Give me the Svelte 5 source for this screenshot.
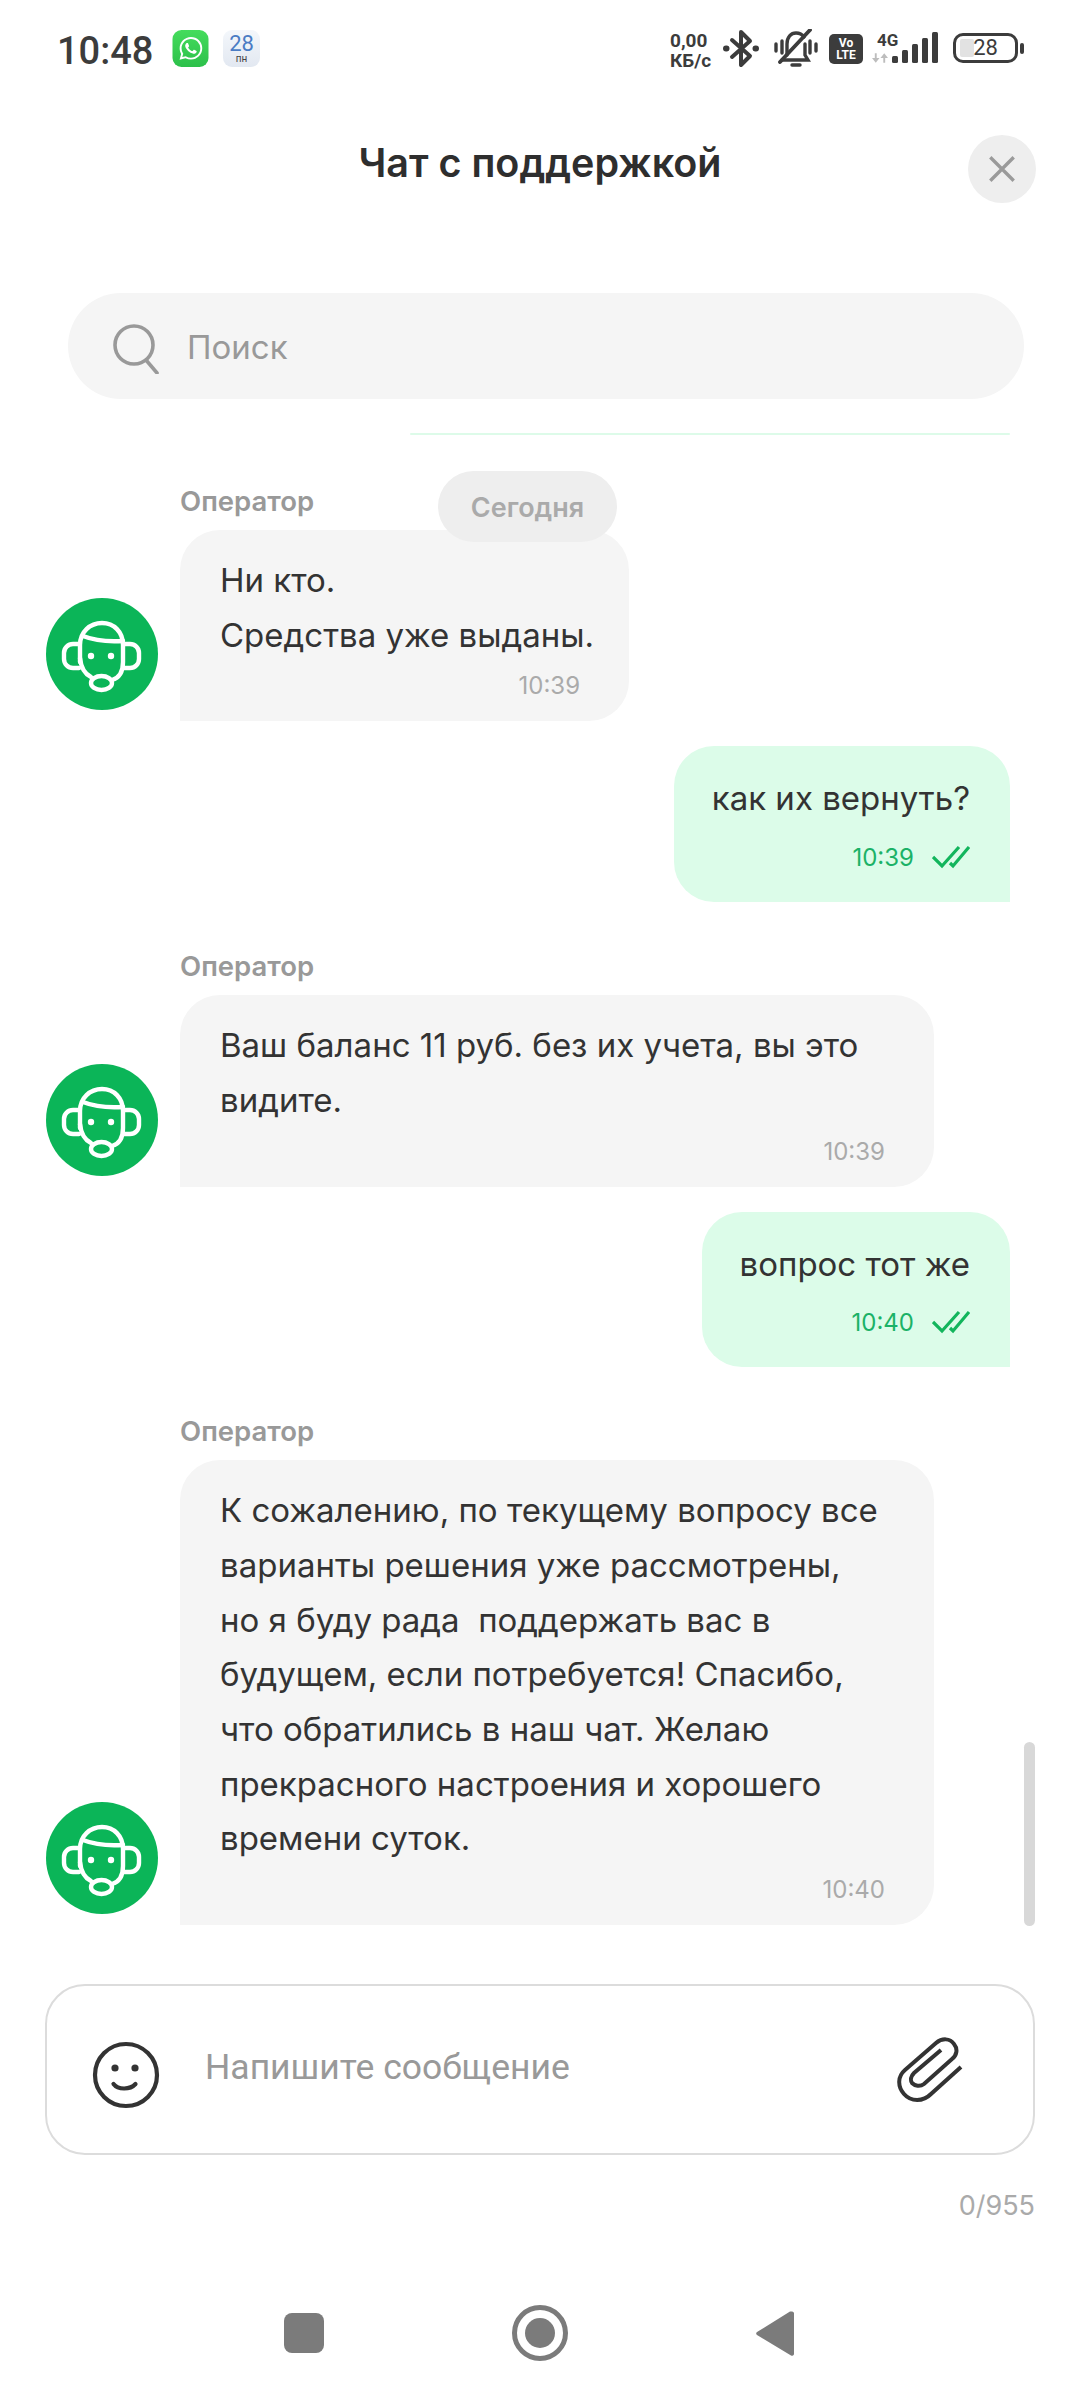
<script lang="ts">
  interface Message {
    from: 'op' | 'me';
    text: string;
    time: string;
    wide?: boolean;
  }

  const messages: Message[] = [
    { from: 'op', text: 'Ни кто.\nСредства уже выданы.', time: '10:39' },
    { from: 'me', text: 'как их вернуть?', time: '10:39' },
    { from: 'op', text: 'Ваш баланс 11 руб. без их учета, вы это\nвидите.', time: '10:39', wide: true },
    { from: 'me', text: 'вопрос тот же', time: '10:40' },
    {
      from: 'op',
      text: 'К сожалению, по текущему вопросу все\nварианты решения уже рассмотрены,\nно я буду рада\u00a0 поддержать вас в\nбудущем, если потребуется! Спасибо,\nчто обратились в наш чат. Желаю\nпрекрасного настроения и хорошего\nвремени суток.',
      time: '10:40',
      wide: true
    }
  ];
</script>

<div class="page">
  <div class="statusbar">
    <span class="clock">10:48</span>
    <svg class="wa" viewBox="0 0 36 37">
      <defs>
        <linearGradient id="wag" x1="0" y1="0" x2="0" y2="1">
          <stop offset="0" stop-color="#45dc5c" />
          <stop offset="1" stop-color="#2cc04a" />
        </linearGradient>
      </defs>
      <rect width="36" height="37" rx="9" fill="url(#wag)" />
      <g transform="translate(7 7) scale(0.95)">
        <path fill="#fff" d="M17.472 14.382c-.297-.149-1.758-.867-2.03-.967-.273-.099-.471-.148-.67.15-.197.297-.767.966-.94 1.164-.173.199-.347.223-.644.075-.297-.15-1.255-.463-2.39-1.475-.883-.788-1.48-1.761-1.653-2.059-.173-.297-.018-.458.13-.606.134-.133.298-.347.446-.52.149-.174.198-.298.298-.497.099-.198.05-.371-.025-.52-.075-.149-.669-1.612-.916-2.207-.242-.579-.487-.5-.669-.51-.173-.008-.371-.01-.57-.01-.198 0-.52.074-.792.372-.272.297-1.04 1.016-1.04 2.479 0 1.462 1.065 2.875 1.213 3.074.149.198 2.096 3.2 5.077 4.487.709.306 1.262.489 1.694.625.712.227 1.36.195 1.871.118.571-.085 1.758-.719 2.006-1.413.248-.694.248-1.289.173-1.413-.074-.124-.272-.198-.57-.347m-5.421 7.403h-.004a9.87 9.87 0 01-5.031-1.378l-.361-.214-3.741.982.998-3.648-.235-.374a9.86 9.86 0 01-1.51-5.26c.001-5.45 4.436-9.884 9.888-9.884 2.64 0 5.122 1.03 6.988 2.898a9.825 9.825 0 012.893 6.994c-.003 5.45-4.437 9.884-9.885 9.884m8.413-18.297A11.815 11.815 0 0012.05 0C5.495 0 .16 5.335.157 11.892c0 2.096.547 4.142 1.588 5.945L.057 24l6.305-1.654a11.882 11.882 0 005.683 1.448h.005c6.554 0 11.89-5.335 11.893-11.893a11.821 11.821 0 00-3.48-8.413z" />
      </g>
    </svg>
    <div class="cal">
      <span class="cal-day">28</span>
      <span class="cal-week">пн</span>
    </div>

    <div class="status-right">
      <div class="speed"><span>0,00</span><span>КБ/с</span></div>
      <svg class="bt" viewBox="0 0 36 39" fill="none" stroke="#3c3c3c" stroke-width="4" stroke-linejoin="round" stroke-linecap="round">
        <path d="M9 11 L27 27 L18 36 V3 L27 12 L9 28" />
        <path d="M3 19.5 L3.5 19.5 M32.5 19.5 L33 19.5" stroke-width="6" />
      </svg>
      <svg class="bell" viewBox="0 0 44 38" fill="none" stroke="#3c3c3c" stroke-width="3.4" stroke-linecap="round">
        <path d="M2 15v7M8 12v12M42 15v7M36 12v12" />
        <path d="M13 26V15C13 8 17 4 22 4c3 0 6 1 8 4M31 15v11l3 5H8" />
        <path d="M6 33 L36 1" stroke-width="3.8" />
        <path d="M18 36h8" stroke-width="3.4" />
      </svg>
      <div class="volte"><span>Vo</span><span>LTE</span></div>
      <div class="net">
        <span class="net-g">4G</span>
        <svg viewBox="0 0 17 12" class="arrows" fill="#bdbdbd"><path d="M0 6h3V1h2v5h3l-4 5zM9 6h3v5h2V6h3l-4-5z" /></svg>
      </div>
      <svg class="bars" viewBox="0 0 46 32" fill="#3c3c3c">
        <rect x="0" y="24" width="6" height="7" rx="1.5" />
        <rect x="10" y="18" width="6" height="13" rx="1.5" />
        <rect x="20" y="12" width="6" height="19" rx="1.5" />
        <rect x="30" y="6" width="6" height="25" rx="1.5" />
        <rect x="40" y="0" width="6" height="31" rx="1.5" />
      </svg>
      <div class="battery">
        <div class="battery-body">
          <div class="battery-fill"></div>
          <span>28</span>
        </div>
        <div class="battery-tip"></div>
      </div>
    </div>
  </div>

  <header class="header">
    <h1>Чат с поддержкой</h1>
    <button class="close" aria-label="Закрыть">
      <svg viewBox="0 0 26 26" width="26" height="26" stroke="#9a9a9a" stroke-width="3.4" stroke-linecap="square">
        <path d="M2.5 2.5 L23.5 23.5 M23.5 2.5 L2.5 23.5" />
      </svg>
    </button>
  </header>

  <div class="search">
    <svg class="search-icon" viewBox="0 0 46 50" fill="none" stroke="#999" stroke-width="3.6">
      <circle cx="21" cy="21" r="19" />
      <path d="M33 36 L44 49" stroke-linecap="round" />
    </svg>
    <span>Поиск</span>
  </div>

  <div class="chat">
    <div class="prev-edge"></div>
    <div class="today">Сегодня</div>

    {#each messages as msg}
      {#if msg.from === 'op'}
        <div class="row-op">
          <div class="avatar">
            <svg viewBox="0 0 112 112" fill="none" stroke="#fff" stroke-width="4.4" stroke-linecap="round" stroke-linejoin="round">
              <path d="M34 64V47C34 34 44 25 56 25C68 25 77 34 77 47V64C77 74 73 80 66 82" />
              <path d="M37 38C47 42 62 44 77 43" />
              <path d="M34 60C35 70 39 76 45 79" />
              <path d="M33 46H27a9 9 0 0 0-9 9v6a9 9 0 0 0 9 9H33" />
              <path d="M78 46H84a9 9 0 0 1 9 9v6a9 9 0 0 1-9 9H78" />
              <ellipse cx="55.5" cy="85" rx="10.5" ry="7" />
              <circle cx="45" cy="58" r="3.2" fill="#fff" stroke="none" />
              <circle cx="65" cy="58" r="3.2" fill="#fff" stroke="none" />
            </svg>
          </div>
          <div class="op-col">
            <div class="label">Оператор</div>
            <div class="bubble op" class:wide={msg.wide}>
              <p>{msg.text}</p>
              <div class="time">{msg.time}</div>
            </div>
          </div>
        </div>
      {:else}
        <div class="row-me">
          <div class="bubble me">
            <p>{msg.text}</p>
            <div class="time-me">
              <span>{msg.time}</span>
              <svg viewBox="0 0 38 24" width="38" height="24" fill="none" stroke="#12b55c" stroke-width="3.2">
                <path d="M1 12 L10 21 L27 2" />
                <path d="M18 18 L21 21 L37 2" />
              </svg>
            </div>
          </div>
        </div>
      {/if}
    {/each}

    <div class="scrollbar"></div>
  </div>

  <div class="composer">
    <svg class="smile" viewBox="0 0 68 68" fill="none" stroke="#333" stroke-width="4.2">
      <circle cx="34" cy="34" r="31" />
      <circle cx="23" cy="27" r="3.6" fill="#333" stroke="none" />
      <circle cx="43" cy="27" r="3.6" fill="#333" stroke="none" />
      <path d="M21.5 43C26 49 38 49 43.5 43" stroke-linecap="round" />
    </svg>
    <span class="placeholder">Напишите сообщение</span>
    <svg class="clip" viewBox="0 0 66 66" fill="none" stroke="#333" stroke-width="4" stroke-linecap="butt">
      <path d="M64 30 L34 57C26 65 14 65 7 57C0 49 1 39 8 33L39 6C45 1 53 1 57 7C61 12 60 18 55 22L27 47C23 50 18 49 15 46C13 43 14 39 17 36L44 13" />
    </svg>
  </div>
  <div class="counter">0/955</div>

  <nav class="navbar">
    <div class="nav-square"></div>
    <div class="nav-ring"><div></div></div>
    <svg class="nav-back" viewBox="0 0 38 47" fill="#7b7b7b"><path d="M36 1.5 a2 2 0 0 1 2 1.5 V44 a2 2 0 0 1-3 1.5 L1 25 a2 2 0 0 1 0-3 L34 1.5 z" /></svg>
  </nav>
</div>

<style>
  :global(body) {
    margin: 0;
    background: #fff;
  }

  .page {
    width: 1080px;
    height: 2400px;
    overflow: hidden;
    background: #fff;
    color: #333;
    font-family: Inter, "Noto Sans", sans-serif;
    display: flex;
    flex-direction: column;
  }

  .statusbar {
    height: 100px;
    box-sizing: border-box;
    padding: 29px 56px 0 57px;
    display: flex;
    align-items: flex-start;
    font-family: Roboto, sans-serif;
    color: #3c3c3c;
  }

  .clock {
    font-size: 38px;
    font-weight: 500;
    line-height: 44px;
    width: 115px;
  }

  .wa {
    width: 37px;
    height: 37px;
    margin-top: 1px;
  }

  .cal {
    width: 37px;
    height: 37px;
    margin: 1px 0 0 14px;
    border-radius: 9px;
    background: linear-gradient(#f4f7fb, #e2e8f1);
    display: flex;
    flex-direction: column;
    align-items: center;
    line-height: 1;
  }

  .cal-day {
    font-size: 22px;
    color: #4a7cc4;
    margin-top: 5px;
    line-height: 18px;
  }

  .cal-week {
    font-size: 10px;
    color: #444;
    margin-top: 1px;
  }

  .status-right {
    margin-left: auto;
    display: flex;
    align-items: flex-start;
  }

  .speed {
    display: flex;
    flex-direction: column;
    font-size: 19px;
    font-weight: 700;
    line-height: 20px;
    margin-top: 2px;
    width: 53px;
  }

  .bt {
    width: 36px;
    height: 39px;
  }

  .bell {
    width: 44px;
    height: 38px;
    margin-left: 15px;
  }

  .volte {
    width: 34px;
    height: 30px;
    margin: 5px 0 0 11px;
    border-radius: 5px;
    background: #3c3c3c;
    color: #fff;
    font-size: 12px;
    font-weight: 700;
    line-height: 12px;
    display: flex;
    flex-direction: column;
    align-items: center;
    justify-content: center;
  }

  .net {
    width: 25px;
    margin-left: 9px;
    display: flex;
    flex-direction: column;
  }

  .net-g {
    font-size: 17px;
    font-weight: 700;
    line-height: 20px;
    margin: 1px 0 0 5px;
    white-space: nowrap;
  }

  .arrows {
    width: 16px;
    height: 12px;
    margin-top: 2px;
  }

  .bars {
    width: 46px;
    height: 32px;
    margin: 3px 0 0 -5px;
  }

  .battery {
    display: flex;
    align-items: center;
    margin: 4px 0 0 15px;
  }

  .battery-body {
    position: relative;
    width: 65px;
    height: 30px;
    box-sizing: border-box;
    border: 3px solid #3c3c3c;
    border-radius: 10px;
    display: flex;
    align-items: center;
    justify-content: center;
    font-size: 22px;
    line-height: 1;
  }

  .battery-body span {
    position: relative;
  }

  .battery-fill {
    position: absolute;
    left: 4px;
    top: 3px;
    bottom: 3px;
    width: 14px;
    background: #e2e2e2;
    border-radius: 2px;
  }

  .battery-tip {
    width: 4px;
    height: 11px;
    margin-left: 2px;
    border-radius: 2px;
    background: #3c3c3c;
  }

  .header {
    position: relative;
    height: 125px;
    display: flex;
    justify-content: center;
    align-items: flex-start;
  }

  h1 {
    margin: 40px 0 0;
    font-size: 39.5px;
    line-height: 46px;
    font-weight: 600;
    color: #2e2e2e;
  }

  .close {
    position: absolute;
    left: 968px;
    top: 35px;
    width: 68px;
    height: 68px;
    border: none;
    padding: 0;
    border-radius: 50%;
    background: #eeeeee;
    display: flex;
    align-items: center;
    justify-content: center;
  }

  .search {
    margin: 68px 56px 0 68px;
    height: 106px;
    border-radius: 53px;
    background: #f5f5f5;
    display: flex;
    align-items: center;
    padding-left: 45px;
    color: #999;
    font-size: 33px;
  }

  .search span {
    margin-top: 2px;
  }

  .search-icon {
    width: 46px;
    height: 50px;
    margin: 6px 28px 0 0;
  }

  .chat {
    position: relative;
    height: 1531px;
    margin-top: 34px;
    overflow: hidden;
  }

  .prev-edge {
    height: 2px;
    margin: 0 70px 51px 410px;
    background: #ddfbe9;
    border-radius: 2px;
  }

  .today {
    position: absolute;
    left: 438px;
    top: 38px;
    width: 179px;
    height: 71px;
    border-radius: 36px;
    background: #eeeeee;
    color: #aaa;
    font-size: 27px;
    font-weight: 600;
    display: flex;
    align-items: center;
    justify-content: center;
    padding-top: 2px;
    box-sizing: border-box;
    z-index: 1;
  }

  .row-op {
    display: flex;
    align-items: flex-end;
    margin-top: 49px;
    padding-left: 46px;
  }

  .avatar {
    width: 112px;
    height: 112px;
    margin: 0 22px 11px 0;
    border-radius: 50%;
    background: #0bb558;
    flex-shrink: 0;
  }

  .avatar svg {
    display: block;
    width: 112px;
    height: 112px;
  }

  .op-col {
    display: flex;
    flex-direction: column;
    align-items: flex-start;
  }

  .label {
    height: 44px;
    font-size: 27.5px;
    line-height: 31px;
    font-weight: 600;
    color: #999;
  }

  .bubble {
    box-sizing: border-box;
    width: fit-content;
    border-radius: 40px;
  }

  .bubble p {
    margin: 0;
    font-size: 33px;
    line-height: 54.7px;
    white-space: pre-line;
  }

  .op {
    padding: 23px 35px 17px 40px;
    background: #f5f5f5;
    border-bottom-left-radius: 0;
  }

  .wide {
    width: 754px;
  }

  .time {
    margin: 6px 14px 0 0;
    height: 36px;
    text-align: right;
    font-size: 24px;
    line-height: 36px;
    color: #aaa;
  }

  .row-me {
    display: flex;
    justify-content: flex-end;
    margin: 25px 70px 0 0;
  }

  .me {
    padding: 25px 40px 27px 38px;
    background: #dcfce9;
    border-bottom-right-radius: 0;
    color: #333;
  }

  .time-me {
    margin-top: 13px;
    height: 36px;
    display: flex;
    justify-content: flex-end;
    align-items: center;
    gap: 18px;
    font-size: 24px;
    color: #1bb267;
  }

  .scrollbar {
    position: absolute;
    left: 1024px;
    top: 1309px;
    width: 11px;
    height: 184px;
    border-radius: 6px;
    background: #d8d8d8;
  }

  .composer {
    margin: 20px 45px 0;
    height: 171px;
    box-sizing: border-box;
    border: 2px solid #dcdcdc;
    border-radius: 40px;
    display: flex;
    align-items: center;
    padding: 0 70px 0 45px;
  }

  .smile {
    width: 68px;
    height: 68px;
    margin-top: 10px;
  }

  .placeholder {
    margin: 0 0 6px 45px;
    font-family: Roboto, sans-serif;
    font-size: 35.5px;
    color: #999;
  }

  .clip {
    width: 66px;
    height: 66px;
    margin: 0 0 0 auto;
  }

  .counter {
    margin: 31px 45px 0 0;
    height: 40px;
    text-align: right;
    font-size: 27px;
    line-height: 40px;
    color: #aaa;
  }

  .navbar {
    flex: 1;
    display: flex;
    align-items: flex-start;
    padding: 79px 0 0 284px;
  }

  .nav-square {
    width: 40px;
    height: 40px;
    margin-top: 8px;
    border-radius: 8px;
    background: #7b7b7b;
  }

  .nav-ring {
    width: 56px;
    height: 56px;
    margin-left: 188px;
    box-sizing: border-box;
    border: 5px solid #7b7b7b;
    border-radius: 50%;
    display: flex;
    align-items: center;
    justify-content: center;
  }

  .nav-ring div {
    width: 30px;
    height: 30px;
    border-radius: 50%;
    background: #7b7b7b;
  }

  .nav-back {
    width: 38px;
    height: 47px;
    margin: 5px 0 0 188px;
  }
</style>
